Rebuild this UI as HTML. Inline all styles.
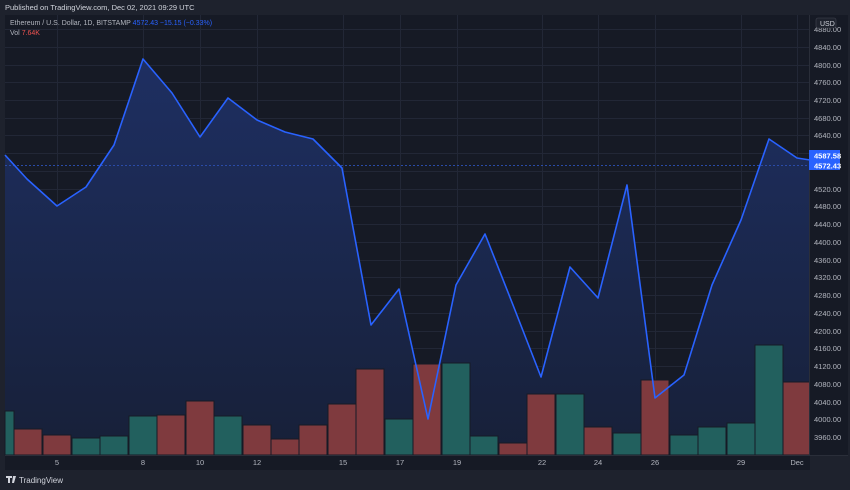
<!DOCTYPE html>
<html><head><meta charset="utf-8"><style>
html,body{margin:0;padding:0;background:#1e222d;width:850px;height:490px;overflow:hidden;font-family:"Liberation Sans",sans-serif}
svg{position:absolute;left:0;top:0}
</style></head><body>
<svg width="850" height="490" xmlns="http://www.w3.org/2000/svg" font-family="Liberation Sans, sans-serif">
<defs>
<linearGradient id="g" x1="0" y1="0" x2="0" y2="1" gradientUnits="userSpaceOnUse" gradientTransform="" >
</linearGradient>
<linearGradient id="f" x1="0" y1="59" x2="0" y2="455" gradientUnits="userSpaceOnUse">
<stop offset="0" stop-color="#1e2f62"/><stop offset="1" stop-color="#172038"/>
</linearGradient>
</defs>
<rect x="0" y="0" width="850" height="490" fill="#1e222d"/>
<rect x="5" y="15" width="805" height="440" fill="#161a25"/>
<rect x="810" y="15" width="38" height="440" fill="#161a25"/>
<rect x="5" y="455" width="805" height="15" fill="#161a25"/>
<g stroke="#222736" stroke-width="1">
<line x1="5" x2="810" y1="29.5" y2="29.5"/><line x1="5" x2="810" y1="47.5" y2="47.5"/><line x1="5" x2="810" y1="65.5" y2="65.5"/><line x1="5" x2="810" y1="82.5" y2="82.5"/><line x1="5" x2="810" y1="100.5" y2="100.5"/><line x1="5" x2="810" y1="118.5" y2="118.5"/><line x1="5" x2="810" y1="135.5" y2="135.5"/><line x1="5" x2="810" y1="153.5" y2="153.5"/><line x1="5" x2="810" y1="171.5" y2="171.5"/><line x1="5" x2="810" y1="189.5" y2="189.5"/><line x1="5" x2="810" y1="206.5" y2="206.5"/><line x1="5" x2="810" y1="224.5" y2="224.5"/><line x1="5" x2="810" y1="242.5" y2="242.5"/><line x1="5" x2="810" y1="260.5" y2="260.5"/><line x1="5" x2="810" y1="277.5" y2="277.5"/><line x1="5" x2="810" y1="295.5" y2="295.5"/><line x1="5" x2="810" y1="313.5" y2="313.5"/><line x1="5" x2="810" y1="331.5" y2="331.5"/><line x1="5" x2="810" y1="348.5" y2="348.5"/><line x1="5" x2="810" y1="366.5" y2="366.5"/><line x1="5" x2="810" y1="384.5" y2="384.5"/><line x1="5" x2="810" y1="402.5" y2="402.5"/><line x1="5" x2="810" y1="419.5" y2="419.5"/><line x1="5" x2="810" y1="437.5" y2="437.5"/>
<line y1="15" y2="455" x1="57.5" x2="57.5"/><line y1="15" y2="455" x1="143.5" x2="143.5"/><line y1="15" y2="455" x1="200.5" x2="200.5"/><line y1="15" y2="455" x1="257.5" x2="257.5"/><line y1="15" y2="455" x1="343.5" x2="343.5"/><line y1="15" y2="455" x1="400.5" x2="400.5"/><line y1="15" y2="455" x1="457.5" x2="457.5"/><line y1="15" y2="455" x1="542.5" x2="542.5"/><line y1="15" y2="455" x1="598.5" x2="598.5"/><line y1="15" y2="455" x1="655.5" x2="655.5"/><line y1="15" y2="455" x1="741.5" x2="741.5"/><line y1="15" y2="455" x1="797.5" x2="797.5"/>
</g>
<polygon fill="url(#f)" points="5,155 27,179 57,206 86,187 114,145 143,59 172,93 200,137 228,98 257,120 285,132 313,139 342,168 371,325 399,289 428,419 456,285 485,234 513,305 541,377 570,267 598,298 627,185 655,398 684,375 712,285 741,220 769,139 797,158 810,160 810,455 5,455"/>
<line x1="5" x2="810" y1="165.5" y2="165.5" stroke="#2a4ba8" stroke-dasharray="2 2"/>
<g stroke="#161a25" stroke-width="1">
<rect x="5" y="411" width="9" height="44" fill="#22605e"/>
<rect x="14" y="429" width="28" height="26" fill="#7f3a3e"/>
<rect x="43" y="435" width="28" height="20" fill="#7f3a3e"/>
<rect x="72" y="438" width="28" height="17" fill="#22605e"/>
<rect x="100" y="436" width="28" height="19" fill="#22605e"/>
<rect x="129" y="416" width="28" height="39" fill="#22605e"/>
<rect x="157" y="415" width="28" height="40" fill="#7f3a3e"/>
<rect x="186" y="401" width="28" height="54" fill="#7f3a3e"/>
<rect x="214" y="416" width="28" height="39" fill="#22605e"/>
<rect x="243" y="425" width="28" height="30" fill="#7f3a3e"/>
<rect x="271" y="439" width="28" height="16" fill="#7f3a3e"/>
<rect x="299" y="425" width="28" height="30" fill="#7f3a3e"/>
<rect x="328" y="404" width="28" height="51" fill="#7f3a3e"/>
<rect x="356" y="369" width="28" height="86" fill="#7f3a3e"/>
<rect x="385" y="419" width="28" height="36" fill="#22605e"/>
<rect x="413" y="364" width="28" height="91" fill="#7f3a3e"/>
<rect x="442" y="363" width="28" height="92" fill="#22605e"/>
<rect x="470" y="436" width="28" height="19" fill="#22605e"/>
<rect x="499" y="443" width="28" height="12" fill="#7f3a3e"/>
<rect x="527" y="394" width="28" height="61" fill="#7f3a3e"/>
<rect x="556" y="394" width="28" height="61" fill="#22605e"/>
<rect x="584" y="427" width="28" height="28" fill="#7f3a3e"/>
<rect x="613" y="433" width="28" height="22" fill="#22605e"/>
<rect x="641" y="380" width="28" height="75" fill="#7f3a3e"/>
<rect x="670" y="435" width="28" height="20" fill="#22605e"/>
<rect x="698" y="427" width="28" height="28" fill="#22605e"/>
<rect x="727" y="423" width="28" height="32" fill="#22605e"/>
<rect x="755" y="345" width="28" height="110" fill="#22605e"/>
<rect x="783" y="382" width="27" height="73" fill="#7f3a3e"/>
</g>
<polyline fill="none" stroke="#2962ff" stroke-width="1.6" stroke-linejoin="round" points="5,155 27,179 57,206 86,187 114,145 143,59 172,93 200,137 228,98 257,120 285,132 313,139 342,168 371,325 399,289 428,419 456,285 485,234 513,305 541,377 570,267 598,298 627,185 655,398 684,375 712,285 741,220 769,139 797,158 810,160"/>
<line x1="809.5" x2="809.5" y1="15" y2="455" stroke="#2a2e39"/>
<line x1="5" x2="848" y1="455.5" y2="455.5" stroke="#2a2e39"/>
<g fill="#b2b5be" font-size="7.5">
<text x="814" y="32">4880.00</text><text x="814" y="50">4840.00</text><text x="814" y="68">4800.00</text><text x="814" y="85">4760.00</text><text x="814" y="103">4720.00</text><text x="814" y="121">4680.00</text><text x="814" y="138">4640.00</text><text x="814" y="192">4520.00</text><text x="814" y="209">4480.00</text><text x="814" y="227">4440.00</text><text x="814" y="245">4400.00</text><text x="814" y="263">4360.00</text><text x="814" y="280">4320.00</text><text x="814" y="298">4280.00</text><text x="814" y="316">4240.00</text><text x="814" y="334">4200.00</text><text x="814" y="351">4160.00</text><text x="814" y="369">4120.00</text><text x="814" y="387">4080.00</text><text x="814" y="405">4040.00</text><text x="814" y="422">4000.00</text><text x="814" y="440">3960.00</text>
</g>
<rect x="816" y="18" width="20" height="10" rx="2" fill="#1e222d" stroke="#434651" stroke-width="0.6"/>
<text x="820" y="26" fill="#d1d4dc" font-size="7">USD</text>
<rect x="809" y="150" width="31" height="10" fill="#2962ff"/>
<rect x="809" y="160" width="31" height="10" fill="#2962ff"/>
<text x="814" y="158.5" fill="#fff" font-size="7.5" font-weight="bold">4587.58</text>
<text x="814" y="168.5" fill="#fff" font-size="7.5" font-weight="bold">4572.43</text>
<g fill="#b2b5be" font-size="7.5" text-anchor="middle">
<text x="57" y="465">5</text><text x="143" y="465">8</text><text x="200" y="465">10</text><text x="257" y="465">12</text><text x="343" y="465">15</text><text x="400" y="465">17</text><text x="457" y="465">19</text><text x="542" y="465">22</text><text x="598" y="465">24</text><text x="655" y="465">26</text><text x="741" y="465">29</text><text x="797" y="465">Dec</text>
</g>
<text x="5" y="10" fill="#d1d4dc" font-size="7.5">Published on TradingView.com, Dec 02, 2021 09:29 UTC</text>
<text x="10" y="25" fill="#b2b5be" font-size="7">Ethereum / U.S. Dollar, 1D, BITSTAMP <tspan fill="#2962ff">4572.43  −15.15 (−0.33%)</tspan></text>
<text x="10" y="35" fill="#b2b5be" font-size="7">Vol <tspan fill="#ef5350">7.64K</tspan></text>
<path d="M6 476h6v2h-2v5h-2v-5h-2z M13 476h3l-2 7h-2z" fill="#d1d4dc"/>
<text x="19" y="483" fill="#d1d4dc" font-size="8">TradingView</text>
</svg>
</body></html>
